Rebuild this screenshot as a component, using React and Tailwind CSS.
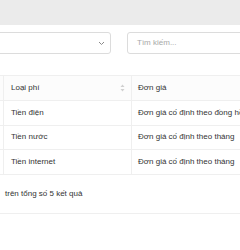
import React from 'react'

const rows = [
  { type: 'Tiền điện', price: 'Đơn giá cố định theo đồng hồ' },
  { type: 'Tiền nước', price: 'Đơn giá cố định theo tháng' },
  { type: 'Tiền internet', price: 'Đơn giá cố định theo tháng' },
]

function SortIcon() {
  return (
    <svg width="5" height="8" viewBox="0 0 5 8" className="text-[#d0d0d0]">
      <path d="M2.5 0.5 L4.5 3 L0.5 3 Z" fill="currentColor" />
      <path d="M2.5 7.5 L4.5 5 L0.5 5 Z" fill="currentColor" />
    </svg>
  )
}

export default function App() {
  return (
    <div className="w-[240px] h-[250px] overflow-hidden bg-white text-[8px] text-[#333] font-['Liberation_Sans',Arial,sans-serif]">
      {/* top bar */}
      <div className="h-[25px] bg-[#ebebeb]" />

      {/* filters */}
      <div className="flex items-center gap-[16px] mt-[7px] ml-[-50px]">
        <div className="w-[161px] h-[22px] shrink-0 rounded-[3px] border border-[#dcdcdc] bg-white flex items-center justify-end pr-[5px]">
          <svg width="7" height="5" viewBox="0 0 7 5" fill="none">
            <path d="M1 1 L3.5 3.5 L6 1" stroke="#8a8a8a" strokeWidth="1" />
          </svg>
        </div>
        <div className="w-[170px] h-[22px] shrink-0 rounded-[3px] border border-[#dcdcdc] bg-white flex items-center pl-[9px] text-[#a8a8a8]">
          Tìm kiếm...
        </div>
      </div>

      {/* table */}
      <div className="mt-[21px] ml-[-26px] w-[330px] border-t border-[#efefef]">
        <div className="grid grid-cols-[30px_128px_172px] h-[25px] bg-[#fcfcfc] border-b border-[#efefef]">
          <div className="border-r border-[#efefef]" />
          <div className="flex items-center justify-between pl-[7px] pr-[6px] border-r border-[#efefef]">
            <span>Loại phí</span>
            <SortIcon />
          </div>
          <div className="flex items-center pl-[6px]">Đơn giá</div>
        </div>
        {rows.map((r, i) => (
          <div key={i} className="grid grid-cols-[30px_128px_172px] h-[24.5px] border-b border-[#efefef]">
            <div className="border-r border-[#efefef]" />
            <div className="flex items-center pl-[7px] border-r border-[#efefef]">{r.type}</div>
            <div className="flex items-center pl-[6px] whitespace-nowrap">{r.price}</div>
          </div>
        ))}
      </div>

      {/* footer */}
      <div className="h-[39px] flex items-center pl-[5px] border-b border-[#efefef]">
        trên tổng số 5 kết quả
      </div>
    </div>
  )
}
